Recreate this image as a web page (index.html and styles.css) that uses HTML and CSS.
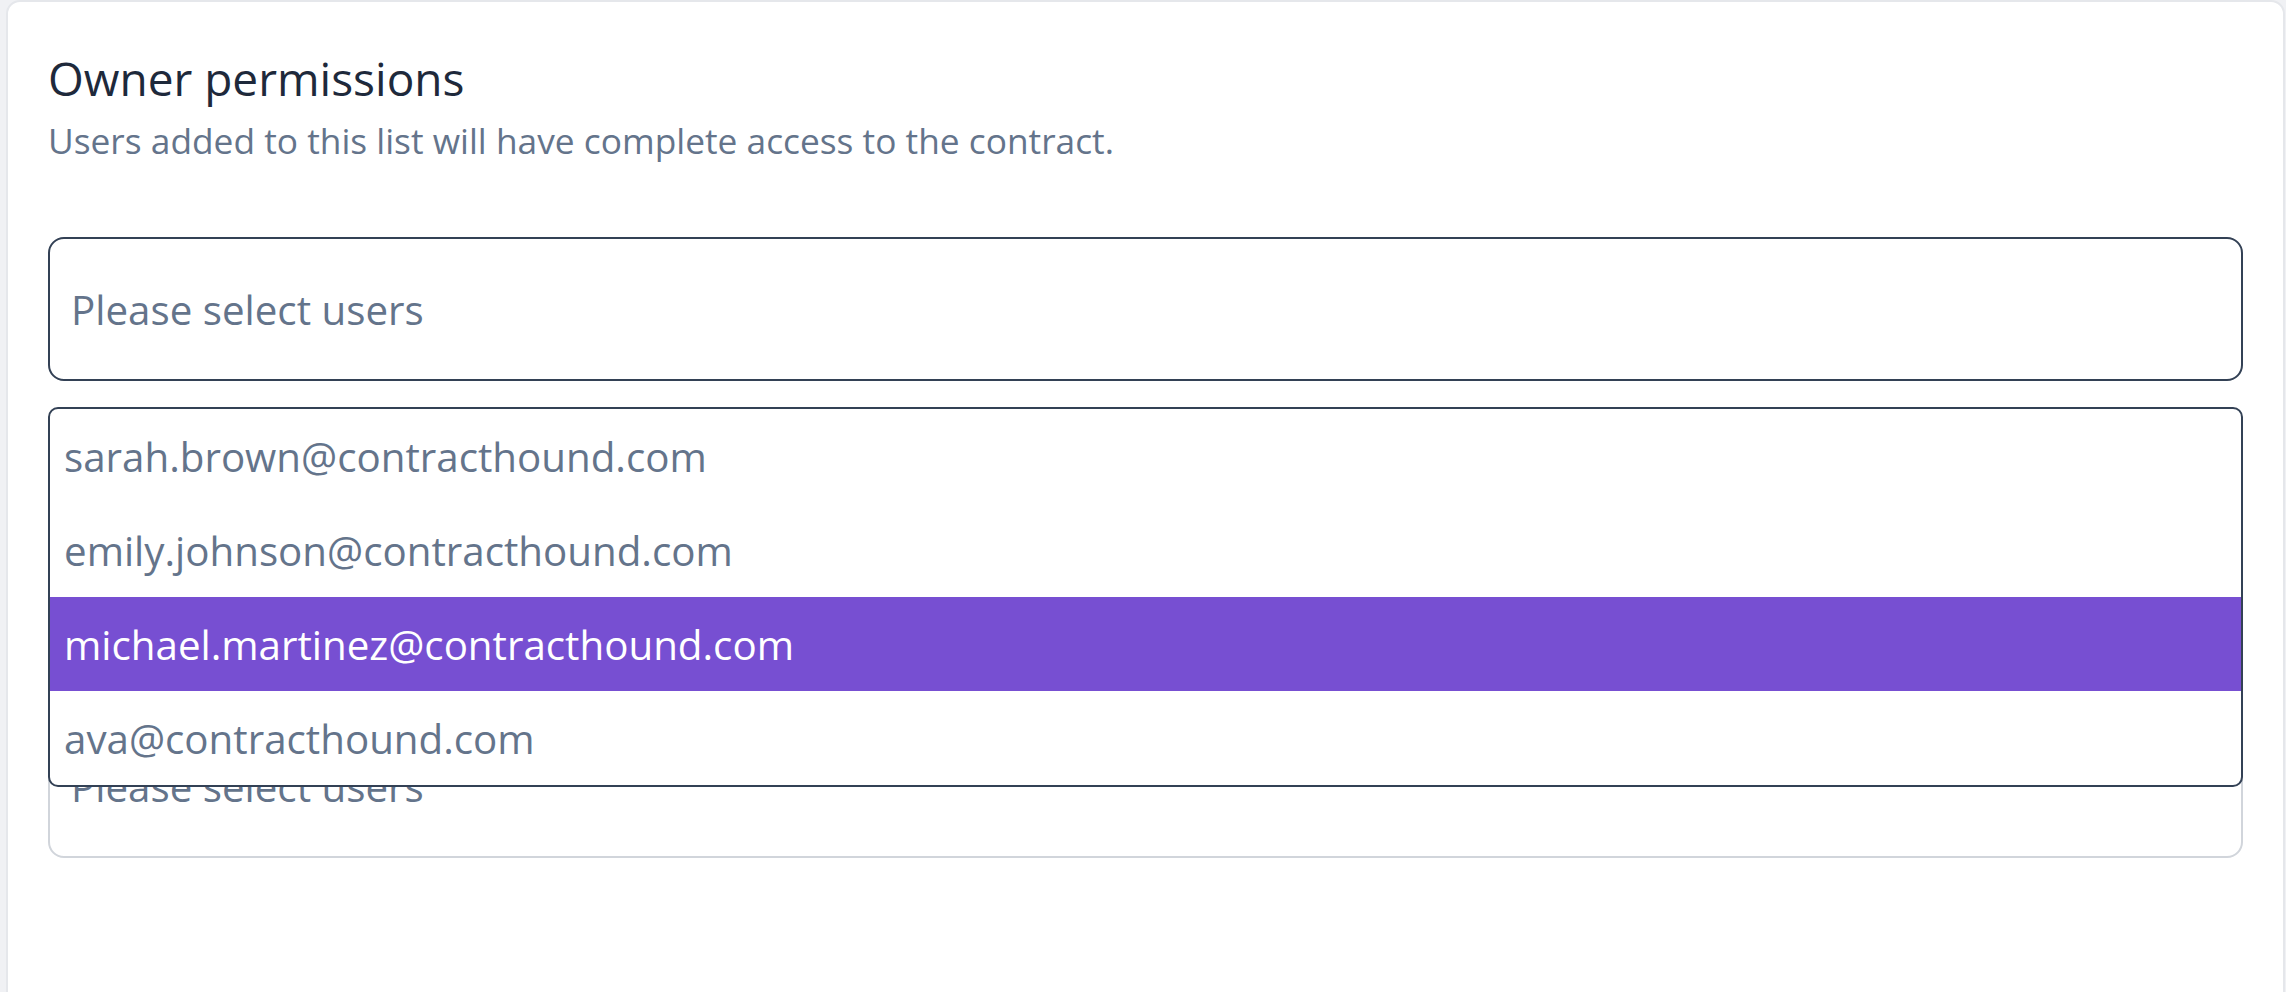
FILE: index.html
```html
<!DOCTYPE html>
<html lang="en">
<head>
<meta charset="utf-8">
<title>Owner permissions</title>
<link rel="stylesheet" href="styles.css">
</head>
<body>
<main class="card">
  <section class="section">
    <h2 class="title">Owner permissions</h2>
    <p class="subtitle">Users added to this list will have complete access to the contract.</p>
    <div class="picker">
      <div class="select select-active">
        <span class="placeholder">Please select users</span>
      </div>
      <ul class="menu">
        <li class="option">sarah.brown@contracthound.com</li>
        <li class="option">emily.johnson@contracthound.com</li>
        <li class="option option-active">michael.martinez@contracthound.com</li>
        <li class="option">ava@contracthound.com</li>
      </ul>
    </div>
  </section>
  <section class="section section-next">
    <div class="select">
      <span class="placeholder">Please select users</span>
    </div>
  </section>
</main>
</body>
</html>
```
FILE: styles.css
```css
html, body {
  margin: 0;
  padding: 0;
}
body {
  background: #f0f1f4;
  font-family: "Open Sans", "Noto Sans", "Liberation Sans", sans-serif;
  padding: 0 0 0 6px;
  overflow: hidden;
}
.card {
  box-sizing: border-box;
  width: 2279px;
  min-height: 1100px;
  background: #ffffff;
  border: 2px solid #e5e7eb;
  border-radius: 14px;
  padding: 46px 40px 40px 40px;
}
.section {
  display: flex;
  flex-direction: column;
}
.title {
  margin: 0;
  font-size: 46px;
  line-height: 60px;
  font-weight: 500;
  color: #1e293b;
}
.subtitle {
  margin: 10px 0 0 0;
  font-size: 35.3px;
  line-height: 44px;
  color: #64748b;
}
.picker {
  position: relative;
  margin-top: 75px;
}
.select {
  box-sizing: border-box;
  height: 144px;
  border: 2px solid #d1d5db;
  border-radius: 16px;
  display: flex;
  align-items: center;
  padding-left: 21px;
}
.select-active {
  border-color: #334155;
}
.placeholder {
  font-size: 40.3px;
  color: #64748b;
}
.section-next {
  margin-top: 333px;
}
.menu {
  position: absolute;
  left: 0;
  right: 0;
  top: 170px;
  margin: 0;
  padding: 0;
  list-style: none;
  background: #ffffff;
  border: 2px solid #334155;
  border-radius: 10px;
  overflow: hidden;
  z-index: 10;
}
.option {
  box-sizing: border-box;
  height: 94px;
  display: flex;
  align-items: center;
  padding-left: 14px;
  font-size: 40.3px;
  color: #64748b;
}
.option-active {
  background: #774fd2;
  color: #ffffff;
}
```
